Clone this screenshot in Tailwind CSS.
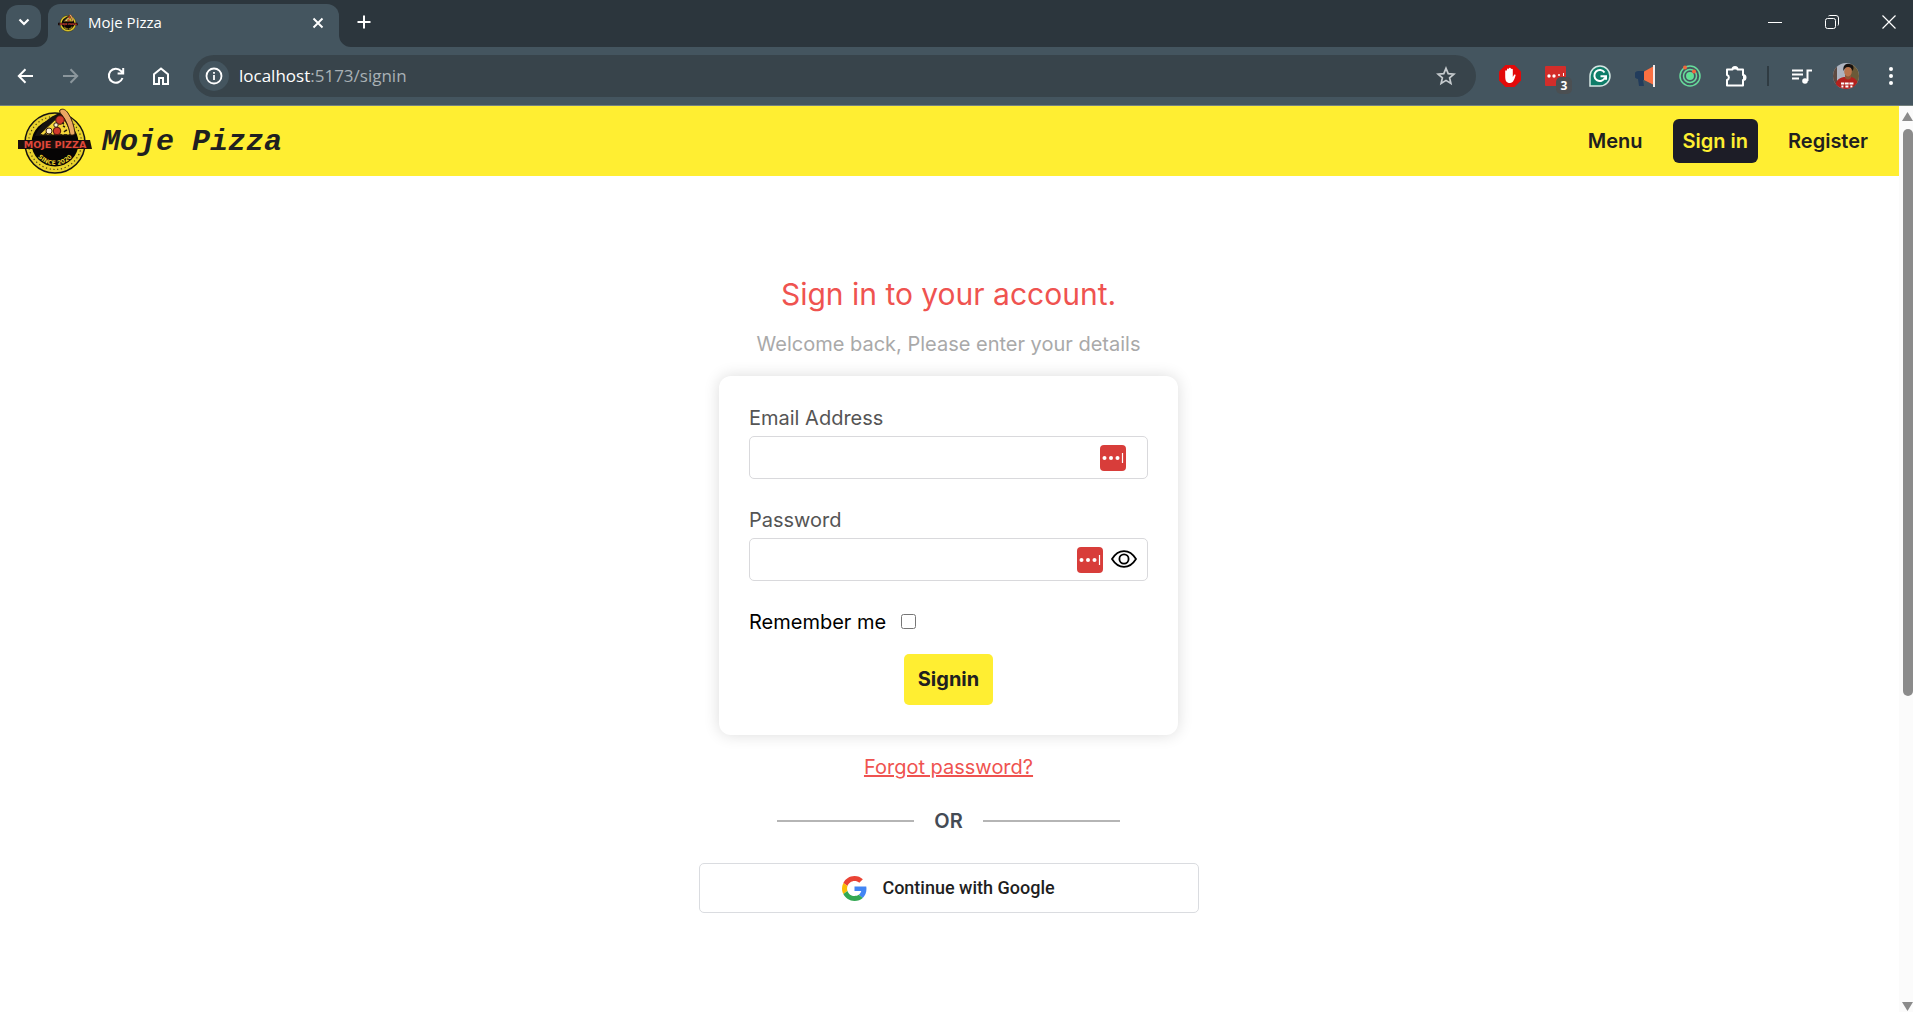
<!DOCTYPE html>
<html lang="en">
<head>
<meta charset="utf-8">
<meta name="viewport" content="width=device-width, initial-scale=1">
<title>Moje Pizza</title>
<script src="https://cdn.jsdelivr.net/npm/@tailwindcss/browser@4"></script>
</head>
<body class="flex h-screen flex-col overflow-hidden bg-white font-['Inter',sans-serif]">
<svg class="hidden" aria-hidden="true">
  <symbol id="logo" viewBox="0 0 74 66">
    <circle cx="37" cy="35" r="30" fill="#e9d22c" stroke="#151310" stroke-width="1.500"/>
    <circle cx="37" cy="35" r="26.5" fill="none" stroke="#4b4310" stroke-width="1.2" stroke-dasharray="1.2 2.6"/>
    <circle cx="37" cy="35" r="23.5" fill="#060505"/>
    <path d="M17 28C22 16 32 9 41 5l3-1 7 23z" fill="#151310"/>
    <path d="M21 27 42 7c5 4 9 12 11 20z" fill="#f3d53a" stroke="#1b1409" stroke-width="1"/>
    <path d="M21 27h32" stroke="#1b1409" stroke-width="1.5" stroke-dasharray="3 2"/>
    <path d="M42 2c3-2 6 0 8 3 4 6 6 13 7 20 0 2-4 3-5 1-1-7-4-14-8-19-2-2-3-4-2-5z" fill="#eba763" stroke="#3a200f" stroke-width="1"/>
    <circle cx="42" cy="12" r="4.300" fill="#cf3a2c" stroke="#4d130c"/>
    <circle cx="39" cy="23" r="3.800" fill="#cf3a2c" stroke="#4d130c"/>
    <circle cx="31" cy="23" r="3" fill="#fff1cf" stroke="#3a200f"/>
    <circle cx="38" cy="17" r="2.200" fill="#fff1cf" stroke="#3a200f"/>
    <path d="m45 18 2 1m0 4 2-1m-22 4 1-1m18-2 1 1m-3-9 2 1" stroke="#27200c" stroke-width="1.500"/>
    <path d="M0 32h72l2 9H0z" fill="#1a0f0c"/>
    <text x="37" y="40" text-anchor="middle" font-family="DejaVu Sans, sans-serif" font-weight="700" font-size="9.500" fill="#e0473a">MOJE PIZZA</text>
    <path id="since" d="M16.500 43A22 22 0 0 0 57.500 43" fill="none"/>
    <text font-family="DejaVu Sans, sans-serif" font-weight="700" font-size="6" fill="#e9d22c" text-anchor="middle"><textPath href="#since" startOffset="50%">SINCE 2020</textPath></text>
  </symbol>
  <symbol id="dots" viewBox="0 0 26 26">
    <rect width="26" height="26" rx="4" fill="#d83d3a"/>
    <circle cx="4.500" cy="13" r="2" fill="#fff"/><circle cx="11" cy="13" r="2" fill="#fff"/><circle cx="17.500" cy="13" r="2" fill="#fff"/>
    <path d="M22.500 8v10" stroke="#fff" stroke-width="1.200"/>
  </symbol>
</svg>

<header class="shrink-0 font-['Open_Sans',sans-serif] text-white">
  <div class="flex h-[47px] bg-[#2c363d]">
    <button aria-label="Search tabs" class="mt-[5px] ml-1.5 flex h-[34px] w-[35px] items-center justify-center rounded-xl bg-[#44555f]">
      <svg class="size-[12px]" viewBox="0 0 12 12" fill="none" stroke="#fff" stroke-width="2.200"><path d="m1.500 3.500 4.500 4.500 4.500-4.500"/></svg>
    </button>
    <div class="relative mt-1 ml-[7px] flex w-[291px] items-center rounded-t-xl bg-[#44555f] pr-3 pb-1.5 pl-[10px] text-[15px]">
      <svg class="absolute bottom-0 -left-3 size-3" viewBox="0 0 12 12"><path d="M12 0v12H0A12 12 0 0 0 12 0" fill="#44555f"/></svg>
      <svg class="absolute -right-3 bottom-0 size-3" viewBox="0 0 12 12"><path d="M0 0v12h12A12 12 0 0 1 0 0" fill="#44555f"/></svg>
      <svg class="h-[20px] w-[20px]"><use href="#logo"/></svg>
      <span class="ml-[10px] grow">Moje Pizza</span>
      <button aria-label="Close tab" class="p-[3px]"><svg class="size-[12px]" viewBox="0 0 12 12" stroke="#fff" stroke-width="1.900"><path d="m1.500 1.500 9 9m0-9-9 9"/></svg></button>
    </div>
    <button aria-label="New tab" class="mb-[3px] ml-[18px] self-center"><svg class="size-[14px]" viewBox="0 0 14 14" stroke="#fff" stroke-width="2"><path d="M7 .5v13M.5 7h13"/></svg></button>
    <div class="mb-1 ml-auto flex items-center gap-[43px] pr-[17px]">
      <button aria-label="Minimize"><svg class="size-[14px]" viewBox="0 0 14 14" stroke="#fff"><path d="M0 7.500h14"/></svg></button>
      <button aria-label="Restore"><svg class="size-[14px]" viewBox="0 0 14 14" fill="none" stroke="#fff"><rect x=".5" y="3.500" width="10" height="10" rx="2"/><path d="M3.500 1C4 .6 4.500.5 5 .5h6a2.500 2.500 0 0 1 2.500 2.500v6c0 .5-.1 1-.5 1.500"/></svg></button>
      <button aria-label="Close"><svg class="size-[14px]" viewBox="0 0 14 14" stroke="#fff" stroke-width="1.200"><path d="m.5.5 13 13m0-13-13 13"/></svg></button>
    </div>
  </div>
  <div class="flex h-[59px] items-center border-b border-[#74817f] bg-[#44555f] pr-5 pl-[16px]">
    <button aria-label="Back"><svg class="size-[20px]" viewBox="0 0 20 20" fill="none" stroke="#fff" stroke-width="2"><path d="M17 10H3m6.500-6.800L2.800 10l6.700 6.800"/></svg></button>
    <button aria-label="Forward" class="ml-[25px]"><svg class="size-[20px]" viewBox="0 0 20 20" fill="none" stroke="#8b969c" stroke-width="2"><path d="M2 10h14m-6.500-6.800 6.700 6.800-6.700 6.800"/></svg></button>
    <button aria-label="Reload" class="ml-[25px]"><svg class="size-[20px]" viewBox="0 0 20 20" fill="none" stroke="#fff" stroke-width="2"><path d="M16.500 12A7 7 0 1 1 15 5l2 2.200M17.200 2v5.600h-5.600"/></svg></button>
    <button aria-label="Home" class="ml-[25px]"><svg class="size-[20px]" viewBox="0 0 20 20" fill="none" stroke="#fff" stroke-width="2"><path d="M3 8.200V18h5v-6h4v6h5V8.200L10 2.500z"/></svg></button>
    <div class="ml-[22px] flex h-[42px] grow items-center rounded-full bg-[#38444b] px-[6px]">
      <button aria-label="Site information" class="flex size-[30px] items-center justify-center rounded-full bg-[#44555f]"><svg class="size-[18px]" viewBox="0 0 18 18" fill="none" stroke="#fff" stroke-width="1.800"><circle cx="9" cy="9" r="7.500"/><path d="M9 8v5M9 5v1.800"/></svg></button>
      <div role="textbox" aria-label="Address" class="grow pl-[10px] text-[17px]">localhost<span class="text-[#a9b1b5]">:5173/signin</span></div>
      <button aria-label="Bookmark" class="mr-[14px]"><svg class="size-[20px]" viewBox="0 0 20 20" fill="none" stroke="#c6cbce" stroke-width="1.700"><path d="m10 2.300 2.200 5.300 5.700.5-4.300 3.700 1.300 5.600L10 14.400l-4.900 3 1.300-5.600-4.300-3.700 5.700-.5z"/></svg></button>
    </div>
    <div class="ml-[23px] flex shrink-0 items-center">
      <svg class="size-[22px]" viewBox="0 0 22 22"><path d="M6.500 0h9L22 6.500v9L15.500 22h-9L0 15.500v-9z" fill="#e20a0a"/><path d="M6.200 11V6.200a.9.900 0 0 1 1.800 0V4.500a.9.900 0 0 1 1.900 0V3.700a1 1 0 0 1 2 0v.9a.9.900 0 0 1 1.900 0V12l1.200-2c.6-.8 1.900-.3 1.500.8-.9 2.700-2 7.200-5.400 7.200-4 0-4.900-2.500-4.900-7z" fill="#fff"/></svg>
      <svg class="ml-[23px] h-[40px] w-[30px]" viewBox="0 0 30 40"><rect x="1" y="10" width="21" height="20" rx="1" fill="#d32d2a"/><circle cx="5" cy="20" r="1.700" fill="#fff"/><circle cx="10" cy="20" r="1.700" fill="#fff"/><circle cx="15" cy="19" r="1" fill="#fff"/><path d="M19.500 17v3" stroke="#fff"/><rect x="12" y="21" width="16" height="17" rx="5" fill="#4b4f52"/><text x="20" y="34" text-anchor="middle" font-family="Open Sans, sans-serif" font-weight="700" font-size="12" fill="#fff">3</text></svg>
      <svg class="ml-[15px] size-[22px]" viewBox="0 0 22 22"><path d="M1 21V11A10 10 0 1 1 11 21z" fill="#0f7d69" stroke="#d5e6e3" stroke-width="1.500"/><path d="M15.500 7.500A5.500 5.500 0 1 0 16 12.500m-4.500-1.300H17v3.500" fill="none" stroke="#fff" stroke-width="2"/></svg>
      <svg class="ml-[24px] size-[22px]" viewBox="0 0 22 22"><path d="M10 6H4a4 4 0 0 0-1 8l1 7h5l-1-6h3z" fill="#223c5c"/><path d="M9 6.500 19 1v19L9 15z" fill="#fb7042"/><path d="M19 0v22" stroke="#f3eaea" stroke-width="2"/></svg>
      <svg class="ml-[22px] size-[22px]" viewBox="0 0 22 22" fill="none" stroke="#67dc9b" stroke-width="1.500"><circle cx="11" cy="11" r="10"/><circle cx="11" cy="11" r="6.500"/><circle cx="11" cy="11" r="3.200" fill="#5ce58f"/><circle cx="6" cy="2.500" r="2" fill="#f2683c" stroke="none"/><circle cx="15" cy="6.500" r="2" fill="#f2683c" stroke="none"/></svg>
      <button aria-label="Extensions" class="ml-[24px]"><svg class="block size-[22px]" viewBox="0 0 22 22"><path d="M2 4.500h5.500a2.500 2.500 0 0 1 5 0h5.500V10a2.500 2.500 0 0 1 0 5v5.500H2V15a2.600 2.600 0 0 0 0-5z" fill="none" stroke="#fff" stroke-width="2" stroke-linejoin="round"/><path d="M7.500 4.500V3h5v1.500zM18 10h2v5h-2z" fill="#fff"/></svg></button>
      <span class="ml-[20px] h-[20px] w-0.5 bg-[#2f3b42]"></span>
      <button aria-label="Media controls" class="ml-[23px]"><svg class="block size-[20px]" viewBox="0 0 20 20" fill="none" stroke="#fff" stroke-width="2"><path d="M0 4.500h11M0 8.500h11M0 12.500h7M15.500 15V4.500H20"/><circle cx="13" cy="15" r="2.800" fill="#fff" stroke="none"/></svg></button>
      <button aria-label="Profile" class="ml-[21px]"><svg class="block size-[26px] rounded-full" viewBox="0 0 26 26"><path d="M0 0h26v26H0z" fill="#aeb4c0"/><path d="M0 0h4v26H0z" fill="#5d4a41"/><path d="M18 0h8v26h-8z" fill="#6a5a38"/><path d="M2 26c0-8 3-11 9-12h7c5 1 7 4 8 12z" fill="#b3211e"/><path d="M12 11h6v4c-2 2-4 2-6 0z" fill="#8f5637"/><ellipse cx="15" cy="8.500" rx="3.800" ry="5" fill="#b9744c"/><path d="M10.500 8c-1-5 2-8 6-7 4 0 5 4 3 7-1-3-2-4-4.500-4s-3 1-4.500 4z" fill="#17110e"/><path d="M8 20.500h3m.7 0h4m.7 0h4m-12 3h2m2 0h3m2 0h2" stroke="#fff" stroke-width="2"/></svg></button>
      <button aria-label="Browser menu" class="ml-[30px]"><svg class="block h-[20px] w-[4px]" viewBox="0 0 4 20" fill="#fff"><circle cx="2" cy="3" r="2"/><circle cx="2" cy="10" r="2"/><circle cx="2" cy="17" r="2"/></svg></button>
    </div>
  </div>
</header>

<div class="flex min-h-0 grow">
  <div class="min-w-0 grow overflow-hidden">
    <nav class="flex h-[70px] items-center bg-[#ffee32] pr-[21px] pl-[18px] text-xl font-semibold text-[#202020]">
      <a href="#" class="flex items-center">
        <svg class="h-[66px] w-[74px]"><use href="#logo"/></svg>
        <span class="ml-[10px] pt-0.5 font-['Liberation_Mono',monospace] text-3xl font-bold italic">Moje Pizza</span>
      </a>
      <div class="ml-auto flex items-center gap-5">
        <a href="#" class="px-[10px] py-2">Menu</a>
        <a href="#" class="rounded-md bg-[#1d1d27] px-[10px] py-2 text-[#ffee32]">Sign in</a>
        <a href="#" class="px-[10px] py-2">Register</a>
      </div>
    </nav>
    <main class="flex flex-col items-center pt-[100px] pr-0.5 text-xl leading-6">
      <h1 class="text-3xl leading-9 font-normal text-[#ef5350]">Sign in to your account.</h1>
      <p class="mt-5 text-[#a9a9a9]">Welcome back, Please enter your details</p>
      <form class="mt-5 flex w-[459px] flex-col rounded-xl bg-white p-[30px] shadow-[0_0_16px_rgba(0,0,0,0.14)]">
        <label for="email" class="text-[#555]">Email Address</label>
        <div class="relative mt-1.5">
          <input id="email" type="email" class="block h-[43px] w-full rounded-[5px] border border-[#d9d9dc] px-3 outline-none">
          <svg class="absolute top-[9px] right-[22px] size-[26px]"><use href="#dots"/></svg>
        </div>
        <label for="password" class="mt-[29px] text-[#555]">Password</label>
        <div class="relative mt-1.5">
          <input id="password" type="password" class="block h-[43px] w-full rounded-[5px] border border-[#d9d9dc] px-3 outline-none">
          <svg class="absolute top-[9px] right-[45px] size-[26px]"><use href="#dots"/></svg>
          <button type="button" aria-label="Show password" class="absolute top-2 right-[11px]"><svg class="block size-[26px]" viewBox="0 0 26 26" fill="none" stroke="#000" stroke-width="1.800"><path d="M1 13C7.500 2.500 18.500 2.500 25 13 18.500 23.500 7.500 23.500 1 13z" stroke-linejoin="round"/><circle cx="13" cy="13" r="4.600"/></svg></button>
        </div>
        <div class="mt-[29px] flex items-center">
          <label for="remember" class="text-black">Remember me</label>
          <input id="remember" type="checkbox" class="mb-0.5 ml-[15px] size-[15px]">
        </div>
        <button type="submit" class="mt-5 h-[51px] self-center rounded-[5px] bg-[#ffee32] px-[14px] pb-0.5 font-bold text-[#202020]">Signin</button>
      </form>
      <a href="#" class="mt-5 text-[#ef5350] underline">Forgot password?</a>
      <div class="mt-[30px] flex items-center gap-5 font-semibold text-[#444b55]">
        <span class="h-0.5 w-[137px] bg-[#b5b5b5]"></span>OR<span class="h-0.5 w-[137px] bg-[#b5b5b5]"></span>
      </div>
      <button class="mt-[30px] flex h-[50px] w-[500px] items-center justify-center gap-[15px] rounded-[5px] border border-[#dadce0] font-['Roboto',sans-serif] text-lg font-medium text-[#1f1f1f]">
        <svg class="size-[25px]" viewBox="0 0 48 48"><path fill="#EA4335" d="M24 9.500c3.540 0 6.710 1.220 9.210 3.600l6.850-6.850C35.900 2.380 30.470 0 24 0 14.620 0 6.510 5.380 2.560 13.220l7.980 6.190C12.430 13.720 17.740 9.500 24 9.500z"/><path fill="#4285F4" d="M46.980 24.550c0-1.570-.15-3.090-.38-4.550H24v9.020h12.940c-.58 2.960-2.260 5.480-4.780 7.180l7.730 6c4.510-4.180 7.090-10.360 7.090-17.650z"/><path fill="#FBBC05" d="M10.530 28.590c-.48-1.450-.76-2.990-.76-4.590s.27-3.140.76-4.590l-7.980-6.190C.92 16.460 0 20.120 0 24c0 3.880.92 7.540 2.560 10.780z"/><path fill="#34A853" d="M24 48c6.480 0 11.930-2.130 15.890-5.810l-7.730-6c-2.150 1.450-4.920 2.300-8.160 2.300-6.260 0-11.570-4.220-13.470-9.910l-7.980 6.190C6.510 42.620 14.620 48 24 48z"/></svg>
        Continue with Google
      </button>
    </main>
  </div>
  <div class="flex w-[14px] shrink-0 flex-col items-end bg-[#fbfbfb] pt-1.5 pl-1" aria-hidden="true">
    <svg class="h-[10px] w-[11px]" viewBox="0 0 11 10"><path d="m5.500 0 5.500 9H0z" fill="#8b8b8b"/></svg>
    <div class="mt-[7px] h-[63%] w-[10px] rounded-full bg-[#8b8b8b]"></div>
    <svg class="mt-auto h-[10px] w-[11px]" viewBox="0 0 11 10"><path d="M0 0h11L5.500 9z" fill="#8b8b8b"/></svg>
  </div>
</div>
</body>
</html>
